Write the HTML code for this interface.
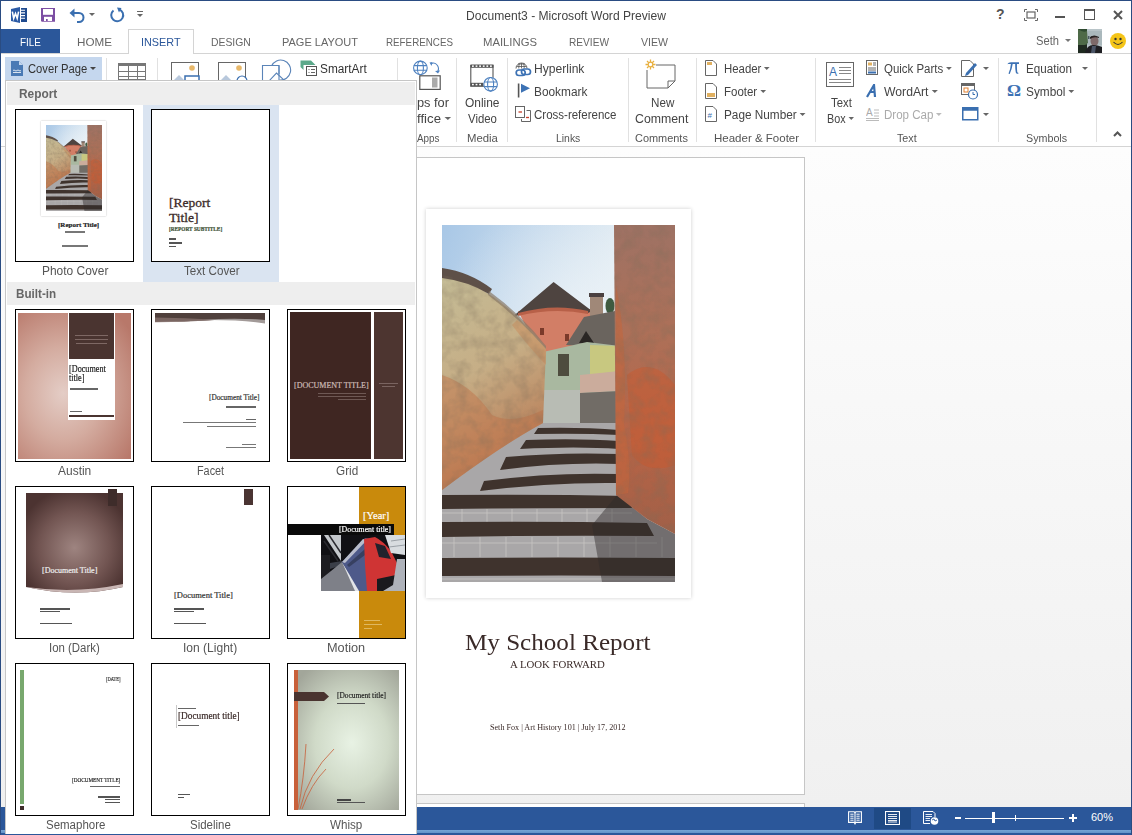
<!DOCTYPE html>
<html><head><meta charset="utf-8">
<style>
*{margin:0;padding:0;box-sizing:border-box}
html,body{width:1132px;height:835px;overflow:hidden;background:#fff;font-family:"Liberation Sans",sans-serif;position:relative}
.a{position:absolute}
.t{position:absolute;white-space:nowrap;font-size:12px;color:#444;line-height:14px}
.tab{position:absolute;top:35px;font-size:11.5px;color:#666;line-height:14px;white-space:nowrap}
.sep{position:absolute;top:58px;width:1px;height:84px;background:#e1e1e1}
.glab{position:absolute;top:131px;font-size:11.5px;color:#555;line-height:14px;white-space:nowrap}
.rt{position:absolute;font-size:12px;color:#444;line-height:14px;white-space:nowrap}
.dd{display:inline-block;width:0;height:0;border-left:3px solid transparent;border-right:3px solid transparent;border-top:3px solid #666;vertical-align:middle;margin-left:3px;position:relative;top:-1px}
.thumb{position:absolute;width:119px;height:153px;border:1px solid #000;background:#fff;overflow:hidden}
.lab{position:absolute;white-space:nowrap;font-size:12px;color:#555;line-height:14px}
.band{position:absolute;left:7px;width:408px;height:23px;background:#eeeeee}
.bt{position:absolute;font-weight:bold;color:#666;font-size:12.5px;line-height:14px;white-space:nowrap}
</style></head><body>
<!-- window frame -->
<div class="a" style="left:0;top:0;width:1132px;height:1px;background:#2a4c82;z-index:5"></div>
<div class="a" style="left:0;top:0;width:1px;height:835px;background:#2a4c82;z-index:5"></div>
<div class="a" style="left:1131px;top:0;width:1px;height:835px;background:#2a4c82;z-index:5"></div>

<!-- title bar -->
<div id="title" class="t" style="left:466.0px;top:9px;font-size:12.5px;color:#444;transform:scaleX(0.967);transform-origin:0 0">Document3 - Microsoft Word Preview</div>

<!-- tabs -->
<div class="a" style="left:1px;top:29px;width:59px;height:25px;background:#2b579a"></div>
<div id="tFILE" class="tab" style="left:20.0px;color:#fff;transform:scaleX(0.864);transform-origin:0 0">FILE</div>
<div id="tHOME" class="tab" style="left:77.0px;;transform:scaleX(1.014);transform-origin:0 0">HOME</div>
<div class="a" style="left:128px;top:29px;width:66px;height:25px;border:1px solid #d4d4d4;border-bottom:none;background:#fff"></div>
<div id="tINSERT" class="tab" style="left:141.0px;color:#2b579a;transform:scaleX(0.941);transform-origin:0 0">INSERT</div>
<div id="tDESIGN" class="tab" style="left:211.2px;;transform:scaleX(0.903);transform-origin:0 0">DESIGN</div>
<div id="tPAGE" class="tab" style="left:281.5px;;transform:scaleX(0.956);transform-origin:0 0">PAGE LAYOUT</div>
<div id="tREF" class="tab" style="left:386.0px;;transform:scaleX(0.852);transform-origin:0 0">REFERENCES</div>
<div id="tMAIL" class="tab" style="left:483.0px;;transform:scaleX(0.982);transform-origin:0 0">MAILINGS</div>
<div id="tREV" class="tab" style="left:569.0px;;transform:scaleX(0.882);transform-origin:0 0">REVIEW</div>
<div id="tVIEW" class="tab" style="left:641.0px;;transform:scaleX(0.919);transform-origin:0 0">VIEW</div>


<!-- title bar icons -->
<svg class="a" style="left:10px;top:6px" width="18" height="18" viewBox="0 0 18 18">
 <path d="M1 3 L10 1 V17 L1 15 Z" fill="#2b5aa5"/>
 <rect x="11" y="2" width="6" height="14" fill="#1f4a8e"/>
 <path d="M11 4.2h4M11 6.9h4M11 9.6h4M11 12.3h4" stroke="#fff" stroke-width="1.1"/>
 <path d="M2.3 5.7 L3.7 12.3 L5.5 7.5 L7.2 12.3 L8.6 5.7" fill="none" stroke="#fff" stroke-width="1.6" stroke-linejoin="miter"/>
</svg>
<svg class="a" style="left:41px;top:8px" width="14" height="14" viewBox="0 0 14 14">
 <path d="M0 0H14V13.7H0.8L0 13Z" fill="#7c4ea3"/>
 <rect x="2" y="1" width="10" height="5.8" fill="#fff"/>
 <rect x="3" y="8.8" width="8" height="4.2" fill="#fff"/>
 <rect x="5" y="11" width="1.7" height="2" fill="#7c4ea3"/>
</svg>
<svg class="a" style="left:69px;top:7px" width="18" height="16" viewBox="0 0 18 16">
 <path d="M3 6 H10 A4.5 4.5 0 0 1 10 15 H8" fill="none" stroke="#3a6fb0" stroke-width="2"/>
 <path d="M0.5 6 L5.5 1.5 L5.5 10.5 Z" fill="#3a6fb0"/>
</svg>
<div class="a" style="left:89px;top:13px;border-left:3px solid transparent;border-right:3px solid transparent;border-top:3px solid #666"></div>
<svg class="a" style="left:109px;top:7px" width="16" height="16" viewBox="0 0 16 16">
 <path d="M10 2.5 A6 6 0 1 1 4.5 3.5" fill="none" stroke="#3a6fb0" stroke-width="2"/>
 <path d="M8 0.5 L12.5 1 L10 5.5 Z" fill="#3a6fb0"/>
</svg>
<div class="a" style="left:137px;top:11px;width:6px;height:1px;background:#666"></div>
<div class="a" style="left:137px;top:14px;border-left:3px solid transparent;border-right:3px solid transparent;border-top:3px solid #666"></div>

<div class="t" style="left:996px;top:7px;font-size:14px;font-weight:bold;color:#555">?</div>
<svg class="a" style="left:1024px;top:9px" width="14" height="12" viewBox="0 0 14 12">
 <path d="M0.5 3V0.5H3M11 0.5H13.5V3M13.5 9V11.5H11M3 11.5H0.5V9" fill="none" stroke="#666" stroke-width="1"/>
 <rect x="3" y="3" width="8" height="6" fill="none" stroke="#666" stroke-width="1.2"/>
</svg>
<div class="a" style="left:1055px;top:16px;width:10px;height:1.5px;background:#555"></div>
<div class="a" style="left:1084px;top:9px;width:11px;height:11px;border:1.3px solid #555;border-top-width:2px"></div>
<svg class="a" style="left:1113px;top:10px" width="10" height="10" viewBox="0 0 10 10"><path d="M1 1L9 9M9 1L1 9" stroke="#555" stroke-width="2"/></svg>
<div id="seth" class="t" style="left:1036.0px;top:34px;font-size:12.5px;color:#666;transform:scaleX(0.894);transform-origin:0 0">Seth</div>
<div class="a" style="left:1065px;top:39px;border-left:3px solid transparent;border-right:3px solid transparent;border-top:3px solid #777"></div>
<svg class="a" style="left:1078px;top:29px;filter:blur(0.3px)" width="24" height="24" viewBox="0 0 24 24">
 <rect width="24" height="24" fill="#b8c4c8"/>
 <rect x="9" y="2" width="15" height="14" fill="#aab8bc"/>
 <path d="M10 7h1.5v3H10zM13 7h1.5v3H13z" fill="#4a5a60"/>
 <rect x="0" y="0" width="9" height="24" fill="#2e4a30"/>
 <path d="M0 0 Q5 4 9 2 L10 14 Q5 18 0 16Z" fill="#4e6a48"/>
 <rect x="0" y="16" width="9" height="8" fill="#1e2a20"/>
 <ellipse cx="16.5" cy="12" rx="4" ry="5" fill="#7e6a6a"/>
 <path d="M12 8 Q16 5 21 8 L21 9 Q16 7 12 10Z" fill="#2a2424"/>
 <path d="M7 24 Q9 16 15 16 Q20 16 24 18 V24Z" fill="#1e1e22"/>
 <path d="M14 17 L18 17 L17 24 L13 24Z" fill="#4a5466"/>
</svg>
<div class="a" style="left:1110px;top:33px;width:16px;height:16px;border-radius:50%;background:#f5c518"></div>
<svg class="a" style="left:1110px;top:33px" width="16" height="16" viewBox="0 0 16 16"><circle cx="5.5" cy="6" r="1.2" fill="#333"/><circle cx="10.5" cy="6" r="1.2" fill="#333"/><path d="M3.5 9 Q8 14 12.5 9" fill="none" stroke="#333" stroke-width="1.1"/></svg>

<!-- ribbon: cover page button etc -->
<div class="a" style="left:5px;top:57px;width:97px;height:24px;background:#c5d7ee"></div>
<svg class="a" style="left:11px;top:61px" width="12" height="15" viewBox="0 0 12 15">
 <path d="M0 0H8L12 4V15H0Z" fill="#4a7ab5"/><path d="M8 0V4H12" fill="#c5d7ee"/>
 <path d="M2 9.5 Q3 8.5 4 9.5 T6 9.5 T8 9.5 T10 9.5" fill="none" stroke="#fff" stroke-width="0.8"/><path d="M2 11.5H10" stroke="#fff" stroke-width="0.8"/>
</svg>
<div id="cover" class="rt" style="left:27.5px;top:62px;color:#333;transform:scaleX(0.936);transform-origin:0 0">Cover Page</div>
<div class="a" style="left:90px;top:67px;border-left:3px solid transparent;border-right:3px solid transparent;border-top:3px solid #444"></div>
<div class="a" style="left:106px;top:58px;width:1px;height:22px;background:#e1e1e1"></div>
<div class="a" style="left:157px;top:58px;width:1px;height:22px;background:#e1e1e1"></div>
<div class="a" style="left:118px;top:63px;width:28px;height:17px;border:1px solid #777;border-top:3px solid #777;background:linear-gradient(90deg,transparent 8.5px,#777 8.5px,#777 9.5px,transparent 9.5px,transparent 17.5px,#777 17.5px,#777 18.5px,transparent 18.5px),linear-gradient(transparent 4.5px,#777 4.5px,#777 5.5px,transparent 5.5px,transparent 9.5px,#777 9.5px,#777 10.5px,transparent 10.5px)"></div>
<svg class="a" style="left:171px;top:62px" width="30" height="18" viewBox="0 0 30 18">
 <rect x="0.5" y="0.5" width="27" height="20" fill="#fff" stroke="#666"/>
 <circle cx="21" cy="6" r="2.8" fill="#e8b86a"/>
 <path d="M3 18 L8 13 L13 18Z" fill="#b8c8dc"/>
 <rect x="14" y="14" width="14" height="6" fill="#fff" stroke="#3a6fb0" stroke-width="1.5"/>
</svg>
<svg class="a" style="left:218px;top:62px" width="30" height="18" viewBox="0 0 30 18">
 <rect x="0.5" y="0.5" width="27" height="20" fill="#fff" stroke="#666"/>
 <circle cx="21" cy="6" r="2.8" fill="#e8b86a"/>
 <path d="M3 18 L8 13 L13 18Z" fill="#b8c8dc"/>
 <circle cx="24" cy="19" r="5" fill="#fff" stroke="#3a6fb0" stroke-width="1.2"/>
</svg>
<svg class="a" style="left:260px;top:59px" width="34" height="21" viewBox="0 0 34 21">
 <path d="M11.5 7 A10 10 0 1 1 19.5 21" fill="none" stroke="#5a84b8" stroke-width="1.1"/>
 <path d="M2.5 21V6.5H19V21" fill="#fff" stroke="#5a84b8" stroke-width="1.1"/>
 <path d="M19 6.5V15" stroke="#5a84b8" stroke-width="1.1"/>
 <path d="M9 22 L16.5 14 L25 22" fill="none" stroke="#5a84b8" stroke-width="1.1"/>
</svg>
<svg class="a" style="left:300px;top:60px" width="18" height="16" viewBox="0 0 18 16">
 <path d="M0.5 0.5H11L15.5 5H3.5V10L0.5 7Z" fill="#5ba98a"/>
 <rect x="6.5" y="6.5" width="10" height="9" fill="#fff" stroke="#555"/>
 <path d="M8.5 9.5h1M11 9.5h4M8.5 12.5h1M11 12.5h4" stroke="#666" stroke-width="1"/>
</svg>
<div id="smart" class="rt" style="left:320.0px;top:62px;color:#333;transform:scaleX(0.986);transform-origin:0 0">SmartArt</div>
<div class="a" style="left:397px;top:58px;width:1px;height:22px;background:#e1e1e1"></div>

<!-- Apps for Office (partially covered) -->
<svg class="a" style="left:412px;top:60px" width="30" height="31" viewBox="0 0 30 31">
 <g fill="none" stroke="#4f82c0" stroke-width="1.1">
  <circle cx="8.4" cy="7.9" r="6.8"/>
  <path d="M1.8 5.6H15M1.8 10.2H15"/>
  <ellipse cx="8.4" cy="7.9" rx="3" ry="6.8"/>
  <path d="M19 4 Q22.5 1.5 25.5 5.5 Q27.5 8.5 25.5 12"/>
 </g>
 <path d="M17.5 2.5 L20.5 2 L19.5 6Z" fill="#4f82c0"/>
 <path d="M23 11 L26 13.5 L28 10.5Z" fill="#4f82c0"/>
 <rect x="7.8" y="15.8" width="20.4" height="13.6" fill="#fff" stroke="#555" stroke-width="1.2"/>
 <rect x="20" y="17.5" width="5.5" height="10" fill="#aaa"/>
</svg>
<div id="psfor" class="rt" style="left:417.0px;top:96px;transform:scaleX(1.066);transform-origin:0 0">ps for</div>
<div id="ffice" class="rt" style="left:417.0px;top:112px;transform:scaleX(1.101);transform-origin:0 0">ffice<span class="dd"></span></div>
<div id="apps" class="glab" style="left:417.0px;;transform:scaleX(0.858);transform-origin:0 0">Apps</div>
<div class="sep" style="left:456px"></div>

<!-- Media -->
<svg class="a" style="left:470px;top:64px" width="30" height="29" viewBox="0 0 30 29">
 <path d="M0.8 1V22.3H14M23 14V1" fill="none" stroke="#555" stroke-width="1.1"/>
 <rect x="0.5" y="0.5" width="23" height="3.3" fill="#555"/>
 <rect x="0.5" y="18.8" width="13" height="3.5" fill="#555"/>
 <g fill="#fff"><rect x="2" y="1.4" width="1.8" height="1.5"/><rect x="5.6" y="1.4" width="1.8" height="1.5"/><rect x="9.2" y="1.4" width="1.8" height="1.5"/><rect x="12.8" y="1.4" width="1.8" height="1.5"/><rect x="16.4" y="1.4" width="1.8" height="1.5"/><rect x="20" y="1.4" width="1.8" height="1.5"/>
 <rect x="2" y="19.8" width="1.8" height="1.5"/><rect x="5.6" y="19.8" width="1.8" height="1.5"/><rect x="9.2" y="19.8" width="1.8" height="1.5"/></g>
 <circle cx="20.6" cy="20.3" r="7" fill="#fff"/>
 <g fill="none" stroke="#4f82c0" stroke-width="1.1">
  <circle cx="20.6" cy="20.3" r="6.8"/>
  <path d="M14 18H27.2M14 22.6H27.2"/>
  <ellipse cx="20.6" cy="20.3" rx="3" ry="6.8"/>
 </g>
</svg>
<div id="online" class="rt" style="left:464.5px;top:96px;transform:scaleX(0.995);transform-origin:0 0">Online</div>
<div id="video" class="rt" style="left:467.5px;top:112px;transform:scaleX(0.948);transform-origin:0 0">Video</div>
<div id="media" class="glab" style="left:466.5px;;transform:scaleX(0.986);transform-origin:0 0">Media</div>
<div class="sep" style="left:507px"></div>

<!-- Links -->
<svg class="a" style="left:515px;top:59px" width="17" height="18" viewBox="0 0 17 18">
 <path d="M1 9.5 A5.5 5.5 0 0 1 12 9.5" fill="none" stroke="#555" stroke-width="0.9"/>
 <path d="M1.5 7.5H11.5M3 5H10M6.5 4V9.5" stroke="#555" stroke-width="0.8"/>
 <path d="M4.5 4.5 Q3.5 7 3.8 9.5M8.5 4.5 Q9.5 7 9.2 9.5" fill="none" stroke="#555" stroke-width="0.8"/>
 <rect x="1.2" y="11" width="9" height="5.5" rx="2.75" fill="none" stroke="#3d72b4" stroke-width="1.7"/>
 <rect x="6.5" y="10" width="9" height="5.5" rx="2.75" fill="none" stroke="#3d72b4" stroke-width="1.7"/>
</svg>
<div id="hyper" class="rt" style="left:534.4px;top:62px;transform:scaleX(1.008);transform-origin:0 0">Hyperlink</div>
<svg class="a" style="left:517px;top:83px" width="14" height="16" viewBox="0 0 14 16">
 <path d="M1.6 0.5V14.5" stroke="#555" stroke-width="1.6"/><path d="M4 0.8L13 5.3L4 9.8Z" fill="#3d72b4"/>
</svg>
<div id="bookm" class="rt" style="left:534.4px;top:85px;transform:scaleX(0.988);transform-origin:0 0">Bookmark</div>
<svg class="a" style="left:514px;top:105px" width="18" height="18" viewBox="0 0 18 18">
 <rect x="1.5" y="1.5" width="9" height="11" fill="#fff" stroke="#555" stroke-width="0.9"/>
 <path d="M12.5 5.5H16.5V16.5H7.5V14" fill="none" stroke="#555" stroke-width="0.9"/>
 <path d="M4.5 7H8" stroke="#c8402a" stroke-width="1.3"/><path d="M12 12.5H15" stroke="#c8402a" stroke-width="1.3"/>
</svg>
<div id="xref" class="rt" style="left:534.4px;top:108px;transform:scaleX(0.959);transform-origin:0 0">Cross-reference</div>
<div id="links" class="glab" style="left:556.0px;;transform:scaleX(0.905);transform-origin:0 0">Links</div>
<div class="sep" style="left:628px"></div>

<!-- Comments -->
<svg class="a" style="left:645px;top:59px" width="32" height="30" viewBox="0 0 32 30">
 <path d="M2 6H30V22L23 29H2Z" fill="#fff" stroke="#666" stroke-width="1"/>
 <path d="M23 29V22H30" fill="none" stroke="#666"/>
 <rect x="0" y="0" width="11" height="11" fill="#fff"/>
 <g stroke="#e8b040" stroke-width="1.3"><path d="M5.5 0.5V10.5M0.5 5.5H10.5M2 2L9 9M9 2L2 9"/></g>
 <circle cx="5.5" cy="5.5" r="2.3" fill="#fff" stroke="#e8b040" stroke-width="1.2"/>
</svg>
<div id="new" class="rt" style="left:650.5px;top:96px;transform:scaleX(0.970);transform-origin:0 0">New</div>
<div id="comment" class="rt" style="left:635.4px;top:112px;transform:scaleX(1.025);transform-origin:0 0">Comment</div>
<div id="comments" class="glab" style="left:635.4px;;transform:scaleX(0.951);transform-origin:0 0">Comments</div>
<div class="sep" style="left:696px"></div>

<!-- Header & Footer -->
<svg class="a" style="left:705px;top:60px" width="12" height="16" viewBox="0 0 12 16">
 <path d="M0.5 0.5H8L11.5 4V15.5H0.5Z" fill="#fff" stroke="#666"/><rect x="2" y="2" width="5" height="3" fill="#e0b060"/>
</svg>
<div id="header" class="rt" style="left:723.6px;top:62px;transform:scaleX(0.950);transform-origin:0 0">Header<span class="dd"></span></div>
<svg class="a" style="left:705px;top:83px" width="12" height="16" viewBox="0 0 12 16">
 <path d="M0.5 0.5H8L11.5 4V15.5H0.5Z" fill="#fff" stroke="#666"/><rect x="2" y="10" width="8" height="4" fill="#e0b060"/>
</svg>
<div id="footer" class="rt" style="left:723.6px;top:85px;transform:scaleX(0.957);transform-origin:0 0">Footer<span class="dd"></span></div>
<svg class="a" style="left:705px;top:106px" width="12" height="16" viewBox="0 0 12 16">
 <path d="M0.5 0.5H8L11.5 4V15.5H0.5Z" fill="#fff" stroke="#666"/><text x="2.5" y="12" font-size="8" font-family="Liberation Sans" fill="#3a6fb0">#</text>
</svg>
<div id="pagenum" class="rt" style="left:723.6px;top:108px;transform:scaleX(0.982);transform-origin:0 0">Page Number<span class="dd"></span></div>
<div id="hf" class="glab" style="left:713.9px;;transform:scaleX(1.001);transform-origin:0 0">Header &amp; Footer</div>
<div class="sep" style="left:815px"></div>

<!-- Text -->
<svg class="a" style="left:826px;top:62px" width="29" height="27" viewBox="0 0 29 27">
 <rect x="0.5" y="0.5" width="27" height="24" fill="#fff" stroke="#666"/>
 <text x="3" y="14" font-size="12" font-family="Liberation Sans" fill="#3a6fb0">A</text>
 <path d="M13 5.5H25M13 8.5H25M13 11.5H25M3 17.5H25M3 20.5H25" stroke="#888"/>
</svg>
<div id="text" class="rt" style="left:830.5px;top:96px;transform:scaleX(0.945);transform-origin:0 0">Text</div>
<div id="box" class="rt" style="left:827.4px;top:112px;transform:scaleX(0.899);transform-origin:0 0">Box<span class="dd"></span></div>
<svg class="a" style="left:866px;top:60px" width="13" height="15" viewBox="0 0 13 15">
 <rect x="0.5" y="0.5" width="11" height="14" fill="#fff" stroke="#666"/>
 <rect x="2" y="2.5" width="4" height="3" fill="#e0b060"/><path d="M7 3h3M7 5h3M2 8h8M2 10h8" stroke="#666"/><rect x="2" y="11.5" width="8" height="2" fill="#3a6fb0"/>
</svg>
<div id="qparts" class="rt" style="left:884.4px;top:62px;transform:scaleX(0.955);transform-origin:0 0">Quick Parts<span class="dd"></span></div>
<svg class="a" style="left:866px;top:84px" width="13" height="14" viewBox="0 0 13 14"><path d="M1 13 L8 1 L9 13 M4 8 H9" fill="none" stroke="#3a6fb0" stroke-width="2.2"/></svg>
<div id="wordart" class="rt" style="left:884.4px;top:85px;transform:scaleX(1.016);transform-origin:0 0">WordArt<span class="dd"></span></div>
<svg class="a" style="left:866px;top:107px" width="14" height="14" viewBox="0 0 14 14"><text x="0" y="9" font-size="10" font-family="Liberation Sans" fill="#aaa">A</text><path d="M8 3h5M8 6h5M8 9h5M0 11.5h13M0 13.5h13" stroke="#bbb"/></svg>
<div id="dropcap" class="rt" style="left:884.4px;top:108px;color:#aaa;transform:scaleX(0.962);transform-origin:0 0">Drop Cap<span class="dd" style="border-top-color:#bbb"></span></div>
<svg class="a" style="left:961px;top:60px" width="18" height="17" viewBox="0 0 18 17">
 <path d="M0.5 0.5H9L12.5 4V16.5H0.5Z" fill="#fff" stroke="#666"/>
 <path d="M5 13 L14 3 L16 5 L7 15 L4 16Z" fill="#3a6fb0"/>
</svg>
<div class="a" style="left:983px;top:67px;border-left:3px solid transparent;border-right:3px solid transparent;border-top:3px solid #666"></div>
<svg class="a" style="left:961px;top:83px" width="18" height="17" viewBox="0 0 18 17">
 <rect x="0.5" y="0.5" width="13" height="11" fill="#fff" stroke="#666"/><rect x="0.5" y="0.5" width="13" height="2.5" fill="#666"/>
 <rect x="3" y="5" width="4" height="4" fill="none" stroke="#e08030"/>
 <circle cx="12" cy="11.5" r="4.5" fill="#fff" stroke="#3a6fb0" stroke-width="1.2"/><path d="M12 9V11.5H14" fill="none" stroke="#3a6fb0"/>
</svg>
<svg class="a" style="left:962px;top:107px" width="17" height="14" viewBox="0 0 17 14">
 <rect x="0.75" y="0.75" width="15" height="12" fill="#fff" stroke="#3a6fb0" stroke-width="1.5"/><rect x="0.75" y="0.75" width="15" height="3" fill="#3a6fb0"/>
</svg>
<div class="a" style="left:983px;top:113px;border-left:3px solid transparent;border-right:3px solid transparent;border-top:3px solid #666"></div>
<div id="textlab" class="glab" style="left:897.0px;;transform:scaleX(0.934);transform-origin:0 0">Text</div>
<div class="sep" style="left:998px"></div>

<!-- Symbols -->
<svg class="a" style="left:1006px;top:61px" width="14" height="14" viewBox="0 0 14 14">
 <path d="M1 3.5 Q2.5 1.2 5 1.2 H13 V3 H1.8Z" fill="#3d72b4"/>
 <path d="M5 2.5 Q4.5 8 2.5 12.5 Q3 13.3 3.8 12.8 Q6 8 6.8 2.5Z" fill="#3d72b4"/>
 <path d="M9.2 2.5 Q9 8 9.8 11.5 Q10.5 13.3 12.5 12.5 L12.3 11.8 Q11.3 12 11.2 10.5 Q10.8 7 11 2.5Z" fill="#3d72b4"/>
</svg>
<div id="equation" class="rt" style="left:1025.5px;top:62px;transform:scaleX(0.971);transform-origin:0 0">Equation</div>
<div class="a" style="left:1082px;top:67px;border-left:3px solid transparent;border-right:3px solid transparent;border-top:3px solid #666"></div>
<div class="t" style="left:1007px;top:81px;font-family:'Liberation Serif',serif;font-size:17.5px;line-height:18px;color:#3d72b4;font-weight:bold">&#937;</div>
<div id="symbol" class="rt" style="left:1025.5px;top:85px;transform:scaleX(0.985);transform-origin:0 0">Symbol<span class="dd"></span></div>
<div id="symbols" class="glab" style="left:1026.3px;;transform:scaleX(0.932);transform-origin:0 0">Symbols</div>
<div class="sep" style="left:1096px"></div>
<svg class="a" style="left:1113px;top:131px" width="9" height="6" viewBox="0 0 9 6"><path d="M1 5L4.5 1.5L8 5" fill="none" stroke="#555" stroke-width="2"/></svg>

<!-- ribbon lines -->
<div class="a" style="left:1px;top:53px;width:128px;height:1px;background:#d4d4d4"></div>
<div class="a" style="left:194px;top:53px;width:937px;height:1px;background:#d4d4d4"></div>
<div class="a" style="left:1px;top:146px;width:1130px;height:1px;background:#d4d4d4"></div>

<!-- doc area -->
<div class="a" style="left:1px;top:147px;width:1130px;height:660px;background:linear-gradient(#fdfdfd,#f0f0f0)"></div>
<!-- page -->
<div class="a" style="left:300px;top:157px;width:505px;height:638px;background:#fff;border:1px solid #c6c6c6"></div>
<div class="a" style="left:300px;top:803px;width:505px;height:5px;background:#fff;border-top:1px solid #c6c6c6;border-right:1px solid #c6c6c6"></div>


<!-- page content -->
<svg width="0" height="0" style="position:absolute">
 <defs>
  <linearGradient id="sky" x1="0" y1="0" x2="0.6" y2="0.35"><stop offset="0" stop-color="#a8c7e6"/><stop offset="1" stop-color="#e2ecf3"/></linearGradient>
  <linearGradient id="lwall" x1="0" y1="0" x2="0.3" y2="1"><stop offset="0" stop-color="#c4bc96"/><stop offset="0.5" stop-color="#c6ae86"/><stop offset="1" stop-color="#b87a54"/></linearGradient>
  <linearGradient id="rwall" x1="0" y1="0" x2="0" y2="1"><stop offset="0" stop-color="#9e7264"/><stop offset="0.35" stop-color="#ad7058"/><stop offset="0.7" stop-color="#b86446"/><stop offset="1" stop-color="#a06048"/></linearGradient>
  <linearGradient id="stair" x1="0" y1="0" x2="1" y2="0"><stop offset="0" stop-color="#b3b0ac"/><stop offset="0.65" stop-color="#a9a6a2"/><stop offset="0.75" stop-color="#6f6a68"/><stop offset="1" stop-color="#605a58"/></linearGradient>
  <radialGradient id="skyglow" cx="0.6" cy="0.45" r="0.6"><stop offset="0" stop-color="#eef4f8" stop-opacity="0.7"/><stop offset="1" stop-color="#eef4f8" stop-opacity="0"/></radialGradient>
  <filter id="noise" x="0" y="0" width="100%" height="100%"><feTurbulence type="fractalNoise" baseFrequency="0.08" numOctaves="3" seed="4"/><feColorMatrix type="matrix" values="0 0 0 0 0.2  0 0 0 0 0.15  0 0 0 0 0.1  0 0 0 1.4 -0.55"/><feComposite in2="SourceAlpha" operator="in"/></filter>
  <symbol id="photo" viewBox="0 0 233 357" preserveAspectRatio="none">
   <rect width="233" height="357" fill="url(#sky)"/><rect width="233" height="200" fill="url(#skyglow)"/>
   <!-- red building -->
   <path d="M76 86 L148 84 L150 132 L100 132 Z" fill="#d27e66"/>
   <path d="M68 94 L111.6 57 L150 86 L146 88 Q112 79 76 90 Z" fill="#4e4440"/>
   <path d="M76 88 Q112 78 146 86 L146 89 Q112 82 76 91Z" fill="#b86048"/>
   <rect x="98" y="103" width="4" height="7" fill="#7a3a2a"/><rect x="123" y="109" width="4" height="7" fill="#7a3a2a"/>
   <rect x="148" y="70" width="13" height="26" fill="#a08878"/><rect x="147" y="68" width="15" height="4" fill="#4a4040"/>
   <ellipse cx="168" cy="81" rx="4.5" ry="8" fill="#3e5a40"/>
   <path d="M124 120 L142 92 L178 85 L178 124 Z" fill="#6a645e"/>
   <path d="M137 118 L144 106 L152 118Z" fill="#2a2624"/>
   <!-- green building -->
   <path d="M101 127 L145 117 L178 121 L178 200 L100 200 Z" fill="#a9b8a0"/>
   <path d="M148 120 L178 121 L178 146 L148 150 Z" fill="#c8c880"/>
   <rect x="116" y="129" width="11" height="22" fill="#4e4c3e"/>
   <path d="M138 150 L178 146 L178 166 L138 168 Z" fill="#cbac9c"/>
   <path d="M138 168 L178 166 L178 200 L138 200 Z" fill="#716c66"/>
   <path d="M101 165 H138 V200 H101Z" fill="#b8bcb4"/>
   <!-- stairs -->
   <path d="M0 256 L101 189 L101 198 L177 198 L177 270 L205 294 L233 309 L233 357 L0 357 Z" fill="#a9a7a8"/>
   <g stroke="#d6d2ce" stroke-width="0.8" opacity="0.7">
    <path d="M0 288H190M0 318H215M0 354H233"/>
    <path d="M20 284V297M45 284V297M70 284V297M95 284V297M120 284V297M145 284V297M170 284V297"/>
    <path d="M12 312V332M38 312V332M64 312V332M90 312V332M116 312V332M142 312V332M168 312V332M194 312V332M220 312V332"/>
   </g>
   <g fill="#3f332d">
    <path d="M96 203 Q140 202 177 205 L177 210 Q140 208 92 209 Z"/>
    <path d="M84 215 Q135 213 177 216 L177 224 Q135 221 78 224 Z"/>
    <path d="M64 232 Q120 227 177 229 L177 239 Q120 237 58 245 Z"/>
    <path d="M42 256 Q110 247 177 249 L177 258 Q110 257 38 266 Z"/>
    <path d="M0 270 Q100 269 186 271 L190 283 Q100 283 0 284 Z"/>
    <path d="M0 297 Q110 296 205 298 L212 311 Q110 310 0 312 Z"/>
    <path d="M0 333 Q120 332 233 333 L233 351 Q120 350 0 351 Z"/>
   </g>
   <path d="M150 300 L175 270 L205 294 L233 309 L233 357 L160 357 Z" fill="#2e2a2a" opacity="0.45"/>
   <!-- left wall -->
   <path d="M0 50 Q50 57 104 123 L101 198 Q60 220 0 265 Z" fill="url(#lwall)"/>
   <path d="M0 150 Q30 160 50 190 Q70 200 101 185 L101 198 Q60 220 0 265 Z" fill="#c07048" opacity="0.45"/><path d="M70 100 Q85 120 104 140 L104 124 Q90 105 75 95Z" fill="#c98c5c" opacity="0.5"/>
   <path d="M0 43 Q28 47 50 64 L47 69 Q25 56 0 53Z" fill="#5e5048"/><path d="M47 66 Q80 90 104 121 L104 124 Q78 94 46 70Z" fill="#8a7a68" opacity="0.7"/>
   <!-- right wall -->
   <path d="M172 0 L233 0 L233 309 L205 294 L174 270 Z" fill="url(#rwall)"/>
   <path d="M174 60 Q186 120 182 200 Q190 240 186 268 L174 270 Z" fill="#c4663c" opacity="0.55"/><path d="M185 150 Q210 130 233 160 V240 Q205 250 190 230Z" fill="#c85a30" opacity="0.5"/>
   
  <g opacity="0.5"><path d="M0 50 Q50 57 104 123 L101 198 Q60 220 0 265 Z" filter="url(#noise)" fill="#000"/><path d="M172 0 L233 0 L233 309 L205 294 L174 270 Z" filter="url(#noise)" fill="#000"/></g>
  </symbol>
 </defs>
</svg>
<div class="a" style="left:426px;top:209px;width:265px;height:389px;background:#fff;box-shadow:0 0 4px rgba(0,0,0,0.2)"></div>
<svg class="a" style="left:442px;top:225px;filter:blur(0.4px)" width="233" height="357"><use href="#photo" width="233" height="357"/></svg>
<div id="dTitle" class="t" style="left:465.0px;top:628px;font-family:'Liberation Serif',serif;font-size:24px;line-height:28px;color:#3a2a28;transform:scaleX(1.046);transform-origin:0 0">My School Report</div>
<div id="dSub" class="t" style="left:510.0px;top:659px;font-family:'Liberation Serif',serif;font-size:10.5px;line-height:12px;color:#3a2a28;transform:scaleX(1.028);transform-origin:0 0">A LOOK FORWARD</div>
<div id="dAuthor" class="t" style="left:489.8px;top:723px;font-family:'Liberation Serif',serif;font-size:8px;line-height:10px;color:#3a2a28;font-weight:normal;transform:scaleX(1.015);transform-origin:0 0">Seth Fox | Art History 101 | July 17, 2012</div>

<!-- status bar -->
<div class="a" style="left:1px;top:807px;width:1130px;height:24px;background:#2b579a"></div>
<div class="a" style="left:1px;top:830px;width:1130px;height:3.5px;background:linear-gradient(#76a6d6,#5a8cc4)"></div>
<div class="a" style="left:0;top:833px;width:1132px;height:2px;background:#2b579a"></div>


<!-- status bar icons -->
<svg class="a" style="left:848px;top:811px" width="14" height="14" viewBox="0 0 14 14">
 <path d="M0.6 0.8 H6.2 L7 1.6 L7.8 0.8 H13.4 V11.4 H7.8 L7 12.4 L6.2 11.4 H0.6Z" fill="none" stroke="#fff" stroke-width="1.1"/>
 <path d="M7 1.6V13.4" stroke="#fff" stroke-width="1.1"/>
 <path d="M2.3 3.2H5.6M2.3 5.2H5.6M2.3 7.2H5.6M2.3 9.2H5.6M8.4 3.2H11.7M8.4 5.2H11.7M8.4 7.2H11.7M8.4 9.2H11.7" stroke="#fff" stroke-width="1"/>
</svg>
<div class="a" style="left:874px;top:808px;width:37px;height:21px;background:#1f4a85"></div>
<svg class="a" style="left:885px;top:811px" width="15" height="14" viewBox="0 0 15 14">
 <rect x="0.5" y="0.5" width="14" height="13" fill="none" stroke="#fff" stroke-width="1.1"/>
 <path d="M3 3.5H12M3 5.5H12M3 7.5H12M3 9.5H12M3 11H12" stroke="#fff" stroke-width="0.9"/>
</svg>
<svg class="a" style="left:923px;top:811px" width="16" height="14" viewBox="0 0 16 14">
 <path d="M0.5 0.5H10L12 2.5V6" fill="none" stroke="#fff" stroke-width="1"/><path d="M0.5 0.5V12.5H7" fill="none" stroke="#fff" stroke-width="1"/>
 <path d="M2.5 3.5H9M2.5 5.5H9M2.5 7.5H7M2.5 9.5H7" stroke="#fff" stroke-width="0.9"/>
 <circle cx="11.5" cy="10" r="3.8" fill="#fff"/><path d="M9 9 L11 8 L12 10 L14 9" stroke="#2b579a" stroke-width="0.9" fill="none"/>
</svg>
<div class="a" style="left:955px;top:817px;width:6px;height:2px;background:#fff"></div>
<div class="a" style="left:965px;top:817.5px;width:99px;height:1px;background:#fff"></div>
<div class="a" style="left:992px;top:812px;width:3px;height:11px;background:#fff"></div>
<div class="a" style="left:1015px;top:815px;width:1px;height:6px;background:#fff"></div>
<div class="a" style="left:1069px;top:817px;width:8px;height:2px;background:#fff"></div>
<div class="a" style="left:1072px;top:814px;width:2px;height:8px;background:#fff"></div>
<div class="t" style="left:1091px;top:811px;font-size:11px;color:#fff;line-height:13px">60%</div>

<!-- dropdown panel -->
<div class="a" style="left:5px;top:80px;width:412px;height:760px;background:#fff;border:1px solid #c6c6c6"></div>
<div class="band" style="top:82px"></div><div id="report" class="bt" style="left:18.5px;top:87px;transform:scaleX(0.951);transform-origin:0 0">Report</div>
<div class="band" style="top:282px"></div><div id="builtin" class="bt" style="left:15.6px;top:287px;transform:scaleX(0.932);transform-origin:0 0">Built-in</div>


<!-- gallery -->
<div class="a" style="left:143px;top:105px;width:136px;height:177px;background:#dae4f1"></div>
<style>
.sf{font-family:"Liberation Serif",serif;position:absolute;white-space:nowrap;line-height:1;-webkit-text-stroke:0.2px}
.tl{position:absolute;height:1px;background:#555}
</style>
<!-- Photo Cover -->
<div class="thumb" style="left:15px;top:109px">
 <div class="a" style="left:25px;top:11px;width:65px;height:95px;background:#fff;box-shadow:0 0 1.5px rgba(0,0,0,0.3)"></div>
 <svg class="a" style="left:30px;top:15px" width="56" height="86"><use href="#photo" width="56" height="86"/></svg>
 <div class="sf" style="left:42px;top:112px;font-size:7px;font-weight:bold;color:#222">[Report Title]</div>
 <div class="tl" style="left:49px;top:121px;width:20px;height:1.5px;background:#777"></div>
 <div class="tl" style="left:46px;top:135px;width:26px;height:1.5px;background:#777"></div>
</div>
<div id="lPhoto" class="lab" style="left:41.9px;top:264px;transform:scaleX(0.995);transform-origin:0 0">Photo Cover</div>
<!-- Text Cover -->
<div class="thumb" style="left:151px;top:109px">
 <div class="sf" style="left:17px;top:85px;font-size:13.5px;line-height:15px;color:#3b2a28;-webkit-text-stroke:0.3px #3b2a28">[Report<br>Title]</div>
 <div class="sf" style="left:17px;top:117px;font-size:5.3px;color:#3e5236;font-weight:bold">[REPORT SUBTITLE]</div>
 <div class="tl" style="left:17px;top:128px;width:7px;height:1.5px;background:#555"></div>
 <div class="tl" style="left:17px;top:132px;width:13px;height:1.5px;background:#555"></div>
 <div class="tl" style="left:17px;top:135.5px;width:7px;height:1.5px;background:#555"></div>
</div>
<div id="lText" class="lab" style="left:183.7px;top:264px;transform:scaleX(0.969);transform-origin:0 0">Text Cover</div>

<!-- Austin -->
<div class="thumb" style="left:15px;top:309px">
 <div class="a" style="left:2px;top:3px;width:113px;height:146px;background:radial-gradient(ellipse 75% 70% at 40% 55%,#e4cdc6 0%,#d4aca0 45%,#b8786a 100%)"></div>
 <div class="a" style="left:52px;top:3px;width:47px;height:107px;background:#fff"></div>
 <div class="a" style="left:53px;top:3px;width:45px;height:46px;background:#4a3430"></div>
 <div class="tl" style="left:59px;top:25px;width:33px;height:1px;background:#7e6864"></div>
 <div class="tl" style="left:59px;top:29px;width:33px;height:1px;background:#7e6864"></div>
 <div class="tl" style="left:60px;top:33px;width:31px;height:1px;background:#7e6864"></div>
 <div class="sf" style="left:53px;top:55px;font-size:9.3px;line-height:9px;color:#222;transform:scaleX(0.88);transform-origin:0 0">[Document<br>title]</div>
 <div class="tl" style="left:54px;top:78px;width:28px;height:1.5px;background:#666"></div>
 <div class="tl" style="left:54px;top:101px;width:12px;height:1px;background:#666"></div>
 <div class="a" style="left:53px;top:105px;width:45px;height:1.5px;background:#4a3430"></div>
</div>
<div id="lAustin" class="lab" style="left:58.3px;top:464px;transform:scaleX(0.998);transform-origin:0 0">Austin</div>

<!-- Facet -->
<div class="thumb" style="left:151px;top:309px">
 <svg class="a" style="left:3px;top:2px" width="112" height="14" viewBox="0 0 112 14">
  <path d="M0 1 H110 V8.5 Q85 6.5 60 8 Q30 9.5 0 9.5Z" fill="#50403c"/>
  <path d="M0 5.5 Q30 6 62 7.8 Q30 9.5 0 10Z" fill="#7a6662"/>
  <path d="M0 9.5 Q30 9.5 62 7.8 Q30 8.8 0 10Z" fill="#7a6662"/>
  <path d="M0 9.8 Q40 8.8 62 7.8 Q35 10 0 10.2Z" fill="#8a7672"/>
  <path d="M48 8 Q80 5.5 110 8 V11.5 Q85 7.5 48 8Z" fill="#a29a98"/>
 </svg>
 <div class="sf" style="left:57px;top:84px;font-size:7.3px;color:#333">[Document Title]</div>
 <div class="tl" style="left:74px;top:96px;width:30px;height:1.5px;background:#666"></div>
 <div class="tl" style="left:94px;top:109px;width:10px;height:1px;background:#666"></div>
 <div class="tl" style="left:31px;top:112px;width:73px;height:1px;background:#777"></div>
 <div class="tl" style="left:55px;top:116px;width:49px;height:1px;background:#777"></div>
 <div class="tl" style="left:90px;top:134px;width:14px;height:1px;background:#777"></div>
 <div class="tl" style="left:74px;top:137px;width:30px;height:1px;background:#777"></div>
</div>
<div id="lFacet" class="lab" style="left:197.4px;top:464px;transform:scaleX(0.903);transform-origin:0 0">Facet</div>

<!-- Grid -->
<div class="thumb" style="left:287px;top:309px">
 <div class="a" style="left:2px;top:2px;width:81px;height:147px;background:#3f2622"></div>
 <div class="a" style="left:86px;top:2px;width:29px;height:147px;background:#4d3530"></div>
 <div class="sf" style="left:6px;top:72px;font-size:8px;color:#cdbbb6">[DOCUMENT TITLE]</div>
 <div class="tl" style="left:30px;top:83px;width:48px;height:1px;background:#6e5854"></div>
 <div class="tl" style="left:30px;top:86px;width:48px;height:1px;background:#6e5854"></div>
 <div class="tl" style="left:50px;top:89px;width:28px;height:1px;background:#6e5854"></div>
 <div class="tl" style="left:91px;top:73px;width:19px;height:1px;background:#7a6460"></div>
 <div class="tl" style="left:94px;top:76px;width:13px;height:1px;background:#7a6460"></div>
</div>
<div id="lGrid" class="lab" style="left:335.8px;top:464px;transform:scaleX(0.979);transform-origin:0 0">Grid</div>

<!-- Ion Dark -->
<div class="thumb" style="left:15px;top:486px">
 <svg class="a" style="left:10px;top:6px" width="97" height="101" viewBox="0 0 97 101">
  <defs><radialGradient id="iond" cx="0.5" cy="0.55" r="0.6"><stop offset="0" stop-color="#9e8480"/><stop offset="0.6" stop-color="#725552"/><stop offset="1" stop-color="#4c3331"/></radialGradient></defs>
  <path d="M0 0 H97 V94 Q50 105 0 94 Z" fill="url(#iond)"/>
  <path d="M0 94 Q50 105 97 94 V91 Q50 101 0 94Z" fill="#c9b6b4"/>
 </svg>
 <div class="a" style="left:92px;top:2px;width:9px;height:17px;background:#3e2c2a"></div>
 <div class="sf" style="left:26px;top:80px;font-size:8px;color:#eee">[Document Title]</div>
 <div class="tl" style="left:24px;top:121px;width:30px;height:1.5px;background:#555"></div>
 <div class="tl" style="left:24px;top:124px;width:20px;height:1px;background:#555"></div>
 <div class="tl" style="left:24px;top:136px;width:32px;height:1px;background:#555"></div>
</div>
<div id="lIonD" class="lab" style="left:49.4px;top:641px;transform:scaleX(0.952);transform-origin:0 0">Ion (Dark)</div>

<!-- Ion Light -->
<div class="thumb" style="left:151px;top:486px">
 <div class="a" style="left:92px;top:2px;width:9px;height:16px;background:#4a3432"></div>
 <div class="sf" style="left:22px;top:104px;font-size:8.5px;color:#333">[Document Title]</div>
 <div class="tl" style="left:22px;top:121px;width:30px;height:1.5px;background:#555"></div>
 <div class="tl" style="left:22px;top:124px;width:20px;height:1px;background:#555"></div>
 <div class="tl" style="left:22px;top:136px;width:32px;height:1px;background:#555"></div>
</div>
<div id="lIonL" class="lab" style="left:183.3px;top:641px;transform:scaleX(1.003);transform-origin:0 0">Ion (Light)</div>

<!-- Motion -->
<div class="thumb" style="left:287px;top:486px">
 <div class="a" style="left:71px;top:0;width:46px;height:151px;background:#c98a0c"></div>
 <div class="sf" style="left:75px;top:24px;font-size:10.5px;color:#fff">[Year]</div>
 <div class="a" style="left:0;top:37px;width:106px;height:11px;background:#0a0a0a"></div>
 <div class="sf" style="left:51px;top:38px;font-size:8.5px;color:#fff;transform:scaleX(0.92);transform-origin:0 0">[Document title]</div>
 <svg class="a" style="left:33px;top:48px;filter:blur(0.25px)" width="84" height="56" viewBox="0 0 84 56">
  <rect width="84" height="56" fill="#101014"/>
  <path d="M3 0 H20 V26 Z" fill="#c4c8cc"/>
  <path d="M8 0 L20 18 M3 6 L17 26" stroke="#2a2a30" stroke-width="1.5"/>
  <path d="M0 20 H9 V46 H0Z" fill="#1c1c20"/>
  <path d="M9 28 L21 26 V30 L9 34Z" fill="#3a3e48"/>
  <path d="M0 56 L0 44 L10 36 L21 27 L42 56Z" fill="#7e8088"/>
  <path d="M21 27 L34 56 L40 56 Z" fill="#e2e4e8"/>
  <path d="M21 27 L44 3 L50 4 L50 56 L38 56 Z" fill="#4e5a8a"/>
  <path d="M21 27 L42 4 L46 5 L24 28Z" fill="#b8bccc"/>
  <path d="M26 30 L44 14 L44 20 L28 32Z" fill="#2e3450" opacity="0.7"/>
  <path d="M43 4 L54 2 Q62 6 70 16 L76 28 L75 40 L66 45 L56 56 L46 56 L44 30Z" fill="#cf3434"/>
  <path d="M54 8 L64 11 L70 24 L58 22Z" fill="#22222c"/>
  <path d="M56 44 L75 40 L72 52 L60 56 L56 56Z" fill="#1a1a1e"/>
  <path d="M64 0 H84 V20 L70 18 Z" fill="#d8dce0"/>
  <path d="M70 6 L84 4 M68 12 L84 10" stroke="#8a9098" stroke-width="0.8"/>
  <path d="M76 24 H84 V56 H62 L72 50Z" fill="#aeb2ba"/>
 </svg>
 <div class="tl" style="left:76px;top:133px;width:16px;height:1px;background:#e0b860"></div>
 <div class="tl" style="left:76px;top:137px;width:18px;height:1px;background:#e0b860"></div>
 <div class="tl" style="left:76px;top:141px;width:8px;height:1px;background:#e0b860"></div>
</div>
<div id="lMotion" class="lab" style="left:327.3px;top:641px;transform:scaleX(1.060);transform-origin:0 0">Motion</div>

<!-- Semaphore -->
<div class="thumb" style="left:15px;top:663px">
 <div class="a" style="left:4px;top:6px;width:4px;height:134px;background:#78a86e"></div>
 <div class="a" style="left:4px;top:142px;width:4px;height:4px;background:#3e2c2a"></div>
 <div class="sf" style="left:90px;top:12px;font-size:6px;color:#333;transform:scaleX(0.75);transform-origin:0 0">[DATE]</div>
 <div class="sf" style="left:56px;top:112.5px;font-size:7px;color:#222;transform:scaleX(0.74);transform-origin:0 0">[DOCUMENT TITLE]</div>
 <div class="tl" style="left:74px;top:122px;width:30px;height:1px;background:#666"></div>
 <div class="tl" style="left:82px;top:132px;width:22px;height:1.5px;background:#555"></div>
 <div class="tl" style="left:89px;top:135px;width:15px;height:1px;background:#555"></div>
 <div class="tl" style="left:89px;top:138px;width:15px;height:1px;background:#555"></div>
</div>
<div id="lSema" class="lab" style="left:45.6px;top:818px;transform:scaleX(0.957);transform-origin:0 0">Semaphore</div>

<!-- Sideline -->
<div class="thumb" style="left:151px;top:663px">
 <div class="a" style="left:24px;top:41px;width:1px;height:23px;background:#c8c8c8"></div>
 <div class="tl" style="left:26px;top:44px;width:18px;height:1px;background:#666"></div>
 <div class="sf" style="left:26px;top:47px;font-size:10px;color:#3a2a28;-webkit-text-stroke:0.2px #3a2a28;transform:scaleX(0.93);transform-origin:0 0">[Document title]</div>
 <div class="tl" style="left:26px;top:61px;width:21px;height:1px;background:#666"></div>
 <div class="tl" style="left:26px;top:130px;width:12px;height:1px;background:#555"></div>
 <div class="tl" style="left:26px;top:133px;width:6px;height:1px;background:#555"></div>
</div>
<div id="lSide" class="lab" style="left:190.4px;top:818px;transform:scaleX(0.955);transform-origin:0 0">Sideline</div>

<!-- Whisp -->
<div class="thumb" style="left:287px;top:663px">
 <div class="a" style="left:6px;top:6px;width:105px;height:140px;background:radial-gradient(ellipse 70% 65% at 55% 52%,#e8f2e4 0%,#d0dac8 50%,#a2a69a 100%)"></div>
 <div class="a" style="left:6px;top:6px;width:3.5px;height:140px;background:#c8603a"></div>
 <svg class="a" style="left:6px;top:28px" width="35" height="9" viewBox="0 0 35 9"><path d="M0 0 H30 L35 4.5 L30 9 H0Z" fill="#4a3430"/></svg>
 <div class="sf" style="left:49px;top:27px;font-size:8.6px;color:#222;transform:scaleX(0.86);transform-origin:0 0">[Document title]</div>
 <div class="tl" style="left:49px;top:39px;width:28px;height:1px;background:#555"></div>
 <svg class="a" style="left:8px;top:75px" width="40" height="70" viewBox="0 0 40 70">
  <path d="M2 70 Q8 40 10 5 M4 70 Q12 35 38 10 M6 70 Q15 45 30 30" fill="none" stroke="#c8603a" stroke-width="0.8"/>
 </svg>
 <div class="tl" style="left:49px;top:135px;width:14px;height:1.5px;background:#444"></div>
 <div class="tl" style="left:49px;top:138px;width:28px;height:1px;background:#555"></div>
</div>
<div id="lWhisp" class="lab" style="left:330.2px;top:818px;transform:scaleX(0.969);transform-origin:0 0">Whisp</div>

<div class="a" style="left:0;top:834px;width:1132px;height:1px;background:#2b579a"></div>
</body></html>
